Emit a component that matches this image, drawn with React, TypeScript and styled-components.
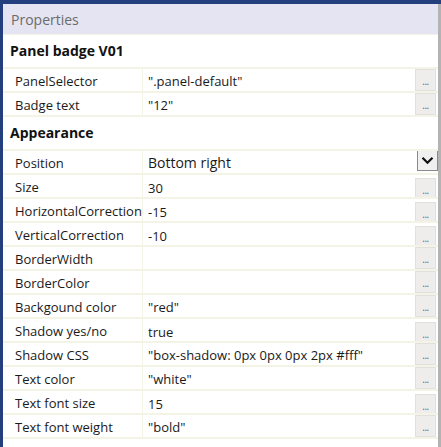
import styled, { createGlobalStyle } from "styled-components";

const GlobalStyle = createGlobalStyle`
  html, body {
    margin: 0;
    padding: 0;
    background: #ffffff;
  }
  body {
    font-family: "Open Sans", "Noto Sans", sans-serif;
  }
`;

type Prop = {
  name: string;
  value: string;
  // literal values (numbers, booleans) sit a touch lower than quoted strings
  literal?: boolean;
  select?: boolean;
};

type Group = { title: string; props: Prop[] };

const groups: Group[] = [
  {
    title: "Panel badge V01",
    props: [
      { name: "PanelSelector", value: '".panel-default"' },
      { name: "Badge text", value: '"12"' },
    ],
  },
  {
    title: "Appearance",
    props: [
      { name: "Position", value: "Bottom right", select: true },
      { name: "Size", value: "30", literal: true },
      { name: "HorizontalCorrection", value: "-15", literal: true },
      { name: "VerticalCorrection", value: "-10", literal: true },
      { name: "BorderWidth", value: "" },
      { name: "BorderColor", value: "" },
      { name: "Backgound color", value: '"red"' },
      { name: "Shadow yes/no", value: "true", literal: true },
      { name: "Shadow CSS", value: '"box-shadow: 0px 0px 0px 2px #fff"' },
      { name: "Text color", value: '"white"' },
      { name: "Text font size", value: "15", literal: true },
      { name: "Text font weight", value: '"bold"' },
    ],
  },
];

const Window = styled.div`
  width: 441px;
  height: 447px;
  box-sizing: border-box;
  border-top: 4px solid #233f7e;
  border-left: 3px solid #233f7e;
  display: flex;
  overflow: hidden;
`;

const Panel = styled.div`
  flex: 1;
  display: flex;
  flex-direction: column;
  background: #ffffff;
`;

const Scrollbar = styled.div`
  width: 3px;
  background: #b3b3b3;
`;

const Header = styled.div`
  height: 30px;
  display: flex;
  align-items: center;
  padding-left: 8px;
  background: #e4e4f2;
  border-bottom: 1px solid #f3f3e6;
  color: #6b6b6b;
  font-size: 14px;
`;

const SectionTitle = styled.div`
  height: 30px;
  display: flex;
  align-items: center;
  padding-left: 7px;
  padding-bottom: 2px;
  font-size: 14px;
  font-weight: 700;
  color: #111111;
  border-bottom: 2px solid #f3f3e6;
`;

const Row = styled.div`
  height: 22px;
  display: grid;
  grid-template-columns: 140px 1fr;
  border-bottom: 2px solid #f3f3e6;
  font-size: 13px;
  color: #1a1a1a;
`;

const NameCell = styled.div`
  display: flex;
  align-items: center;
  padding-left: 12px;
  border-right: 1px solid #f3f3e6;
  white-space: nowrap;
  overflow: hidden;
  padding-top: 1px;
`;

const ValueCell = styled.div<{ $literal?: boolean; $select?: boolean }>`
  display: flex;
  align-items: center;
  padding-left: 5px;
  padding-top: ${(p) => (p.$literal ? "4px" : "1px")};
  font-size: ${(p) => (p.$select ? "14px" : "13px")};
  white-space: nowrap;
  overflow: hidden;
`;

const ValueText = styled.span`
  flex: 1;
`;

const EllipsisButton = styled.div`
  width: 21px;
  height: 22px;
  margin-right: 2px;
  align-self: flex-start;
  margin-top: -1px;
  box-sizing: border-box;
  border: 1px solid #e2e0df;
  background: #efedec;
  color: #6a6a6a;
  font-size: 10px;
  line-height: 1;
  display: flex;
  align-items: flex-end;
  justify-content: center;
  padding-bottom: 4px;
  letter-spacing: -0.5px;
`;

const SelectButton = styled.div`
  width: 21px;
  height: 21px;
  align-self: flex-start;
  margin-top: -2px;
  box-sizing: border-box;
  border: 1px solid #8a8a8a;
  background: #f0f0f0;
  display: flex;
  align-items: center;
  justify-content: center;
`;

const Chevron = () => (
  <svg width="13" height="9" viewBox="0 0 13 9">
    <path d="M1.5 1.8 L6.5 6.8 L11.5 1.8" fill="none" stroke="#111" strokeWidth="2.2" />
  </svg>
);

const App = () => {
  return (
    <>
      <GlobalStyle />
      <Window>
        <Panel>
          <Header>Properties</Header>
          {groups.map((group) => (
            <div key={group.title}>
              <SectionTitle>{group.title}</SectionTitle>
              {group.props.map((prop) => (
                <Row key={prop.name}>
                  <NameCell>{prop.name}</NameCell>
                  <ValueCell $literal={prop.literal} $select={prop.select}>
                    <ValueText>{prop.value}</ValueText>
                    {prop.select ? (
                      <SelectButton>
                        <Chevron />
                      </SelectButton>
                    ) : (
                      <EllipsisButton>...</EllipsisButton>
                    )}
                  </ValueCell>
                </Row>
              ))}
            </div>
          ))}
        </Panel>
        <Scrollbar />
      </Window>
    </>
  );
};

export default App;
